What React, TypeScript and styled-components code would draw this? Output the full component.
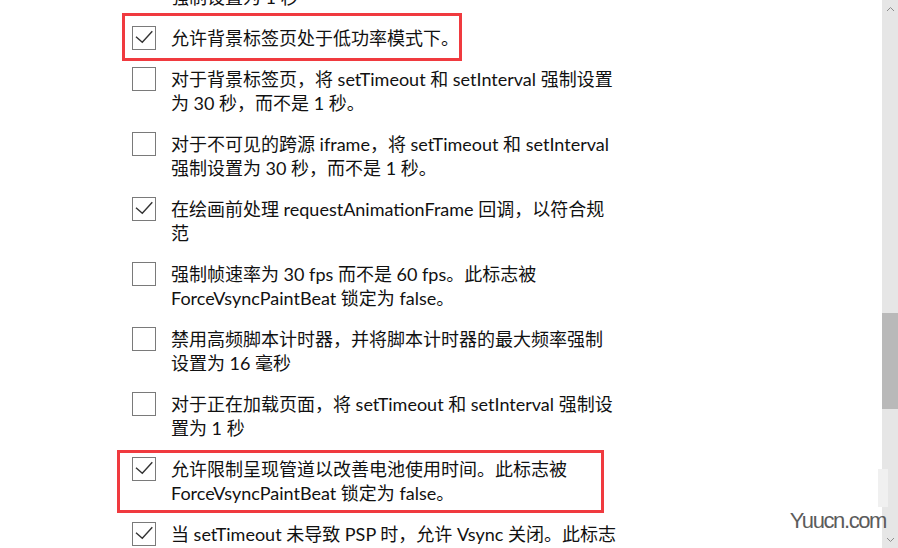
import styled, { createGlobalStyle } from "styled-components"

const GlobalStyle = createGlobalStyle`
  html, body {
    margin: 0;
    padding: 0;
    background: #fff;
  }
  body {
    font-family: Lato, "Noto Sans CJK SC", sans-serif;
  }
`

interface Flag {
  lines: string[]
  checked: boolean
  highlight?: "small" | "wide"
}

const flags: Flag[] = [
  { lines: ["对于可见页面，将 setTimeout 和 setInterval", "强制设置为 1 秒"], checked: false },
  { lines: ["允许背景标签页处于低功率模式下。"], checked: true, highlight: "small" },
  { lines: ["对于背景标签页，将 setTimeout 和 setInterval 强制设置", "为 30 秒，而不是 1 秒。"], checked: false },
  { lines: ["对于不可见的跨源 iframe，将 setTimeout 和 setInterval", "强制设置为 30 秒，而不是 1 秒。"], checked: false },
  { lines: ["在绘画前处理 requestAnimationFrame 回调，以符合规", "范"], checked: true },
  { lines: ["强制帧速率为 30 fps 而不是 60 fps。此标志被", "ForceVsyncPaintBeat 锁定为 false。"], checked: false },
  { lines: ["禁用高频脚本计时器，并将脚本计时器的最大频率强制", "设置为 16 毫秒"], checked: false },
  { lines: ["对于正在加载页面，将 setTimeout 和 setInterval 强制设", "置为 1 秒"], checked: false },
  { lines: ["允许限制呈现管道以改善电池使用时间。此标志被", "ForceVsyncPaintBeat 锁定为 false。"], checked: true, highlight: "wide" },
  { lines: ["当 setTimeout 未导致 PSP 时，允许 Vsync 关闭。此标志", "被 ForceVsyncPaintBeat 锁定为 false。"], checked: true },
]

const Page = styled.div`
  display: flex;
  width: 898px;
  height: 548px;
  overflow: hidden;
  position: relative;
`

const Content = styled.div`
  flex: 1;
  overflow: hidden;
`

const List = styled.ul`
  list-style: none;
  margin: -39px 0 0 0;
  padding: 0 0 0 132px;
  display: flex;
  flex-direction: column;
  gap: 17px;
`

const Row = styled.li`
  position: relative;
  display: flex;
  align-items: flex-start;
  gap: 15px;
`

const Box = styled.span`
  flex: 0 0 auto;
  width: 24px;
  height: 24px;
  box-sizing: border-box;
  border: 1px solid #7a7a7a;
  background: #fff;
  display: flex;
`

const Label = styled.div`
  font-size: 18px;
  line-height: 24px;
  color: #111;
`

const Line = styled.span`
  display: block;
  white-space: nowrap;
`

const Highlight = styled.div<{ $wide?: boolean }>`
  position: absolute;
  box-sizing: border-box;
  border: 3px solid #f03a3f;
  pointer-events: none;
  left: ${({ $wide }) => ($wide ? "-15px" : "-10px")};
  top: ${({ $wide }) => ($wide ? "-7px" : "-13px")};
  width: ${({ $wide }) => ($wide ? "487px" : "340px")};
  height: ${({ $wide }) => ($wide ? "63px" : "48px")};
`

const ScrollBar = styled.div`
  flex: 0 0 16px;
  display: flex;
  flex-direction: column;
  background: #e6e6e6;
`

const Arrow = styled.div`
  height: 17px;
  display: flex;
  align-items: center;
  justify-content: center;
`

const Track = styled.div`
  flex: 1;
  padding-top: 296px;
`

const Thumb = styled.div`
  height: 96px;
  background: #b9b9b9;
`

const Watermark = styled.div`
  position: absolute;
  right: 12px;
  bottom: 14px;
  font-family: "Liberation Sans", Arial, sans-serif;
  font-size: 22px;
  letter-spacing: -1.4px;
  color: #5c5c5c;
  line-height: 26px;
`

const Smudge = styled.div`
  position: absolute;
  right: 10px;
  top: 469px;
  width: 10px;
  height: 38px;
  background: #f0f0f0;
`

const Check = () => (
  <svg width="22" height="22" viewBox="0 0 22 22">
    <path d="M3 9.7 L9.3 15.3 L19.3 4.3" fill="none" stroke="#333" strokeWidth="1.4" />
  </svg>
)

export default function App() {
  return (
    <>
      <GlobalStyle />
      <Page>
        <Content>
          <List>
            {flags.map((f, i) => (
              <Row key={i}>
                <Box>{f.checked && <Check />}</Box>
                <Label>
                  {f.lines.map((l, j) => (
                    <Line key={j}>{l}</Line>
                  ))}
                </Label>
                {f.highlight && <Highlight $wide={f.highlight === "wide"} />}
              </Row>
            ))}
          </List>
        </Content>
        <ScrollBar>
          <Arrow>
            <svg width="9" height="6" viewBox="0 0 9 6">
              <path d="M1 5 L4.5 1.5 L8 5" fill="none" stroke="#8c8c8c" strokeWidth="1" />
            </svg>
          </Arrow>
          <Track>
            <Thumb />
          </Track>
          <Arrow>
            <svg width="9" height="6" viewBox="0 0 9 6">
              <path d="M1 1 L4.5 4.5 L8 1" fill="none" stroke="#8c8c8c" strokeWidth="1" />
            </svg>
          </Arrow>
        </ScrollBar>
        <Smudge />
        <Watermark>Yuucn.com</Watermark>
      </Page>
    </>
  )
}
